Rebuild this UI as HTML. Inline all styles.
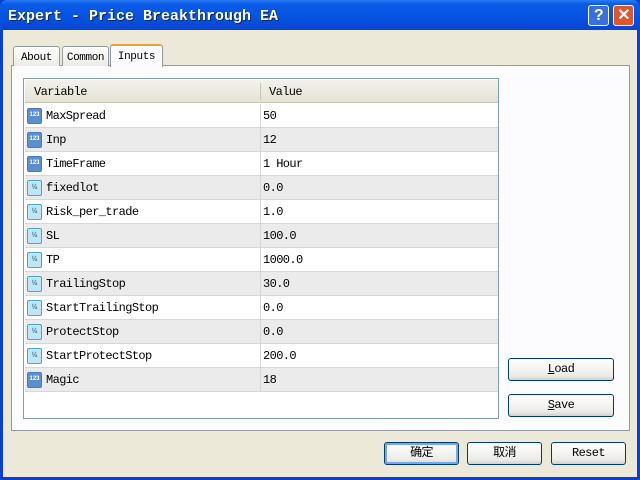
<!DOCTYPE html><html><head><style>
*{margin:0;padding:0;box-sizing:border-box}
body{width:640px;height:480px;overflow:hidden;background:#0a3fd4;font-family:"Liberation Mono","Noto Sans CJK SC",monospace;font-size:12px;letter-spacing:-0.6px;position:relative}
.title{position:absolute;left:0;top:0;width:640px;height:30px;background:linear-gradient(#2b7cf5 0,#0b5ce8 4px,#0550e0 20px,#0a44d0 30px);border-radius:7px 7px 0 0}
.title span{position:absolute;left:8px;top:8px;color:#fff;font-weight:bold;font-size:15px;text-shadow:1px 1px #0a246a;letter-spacing:0}
.tb{position:absolute;top:5px;width:21px;height:21px;border:1px solid #fff;border-radius:3px;color:#fff;font:bold 16px "Liberation Sans",sans-serif;text-align:center;line-height:19px}
.body{position:absolute;left:3px;top:30px;width:634px;height:447px;background:#ece9d8}
.tab{position:absolute;top:44px;height:22px;border:1px solid #919b9c;border-bottom:none;background:linear-gradient(#fff,#ecebe6);border-radius:3px 3px 0 0;padding:5px 0 0;text-align:center;font-size:11px;letter-spacing:-0.4px}
.panel{position:absolute;left:11px;top:65px;width:619px;height:366px;border:1px solid #919b9c;background:#fcfcfe}
.grid{position:absolute;left:23px;top:78px;width:476px;height:341px;border:1px solid #7f9db9;background:#fff}
.row{position:absolute;left:1px;width:473px;height:24px;border-bottom:1px solid #d6d6d6}
.row div{position:absolute;top:5px}
.c1{left:21px}.c2{left:238px}
.sep{position:absolute;left:235px;top:0!important;width:1px;height:23px;background:#d6d6d6}
.ic{position:absolute;left:2px;top:4px;width:15px;height:16px;border:1px solid #4a7bb8;border-radius:2px;font:bold 6px "Liberation Sans",sans-serif;line-height:13px;text-align:center;color:#fff;background:#5b8fd0;letter-spacing:0}
.ic.f{background:#bfe6f2;border-color:#4aa6c8;color:#2a6f90;font-size:7px}
.btn{position:absolute;height:23px;border:1px solid #003c74;border-radius:3px;background:linear-gradient(#fff,#ecebe6 80%,#d6d0c5);text-align:center;line-height:21px}
</style></head><body>
<div class="title"><span>Expert - Price Breakthrough EA</span>
<div class="tb" style="left:588px;background:#3a6fe0">?</div>
<div class="tb" style="left:613px;background:#e0542e">✕</div></div>
<div class="body"></div>
<div class="panel"></div>
<div class="tab" style="left:13px;width:47px;top:46px;height:20px">About</div>
<div class="tab" style="left:62px;width:47px;top:46px;height:20px">Common</div>
<div class="tab" style="left:110px;width:53px;height:23px;background:#fcfcfe;border-top:2px solid #f0a030">Inputs</div>
<div class="grid">
<div class="row" style="top:1px;height:23px;background:linear-gradient(#f3f2ea,#e6e3d5);border-bottom:1px solid #c8c5b5"><div style="left:9px;top:5px">Variable</div><div class="c2" style="left:244px">Value</div><div class="sep" style="background:#c8c5b5;top:3px!important;height:17px"></div></div>
</div>
<div id="rows"></div>
<div class="btn" style="left:508px;top:358px;width:106px"><u>L</u>oad</div>
<div class="btn" style="left:508px;top:394px;width:106px"><u>S</u>ave</div>
<div class="btn" style="left:384px;top:442px;width:75px;box-shadow:inset 0 0 0 2px #7ba6e8">确定</div>
<div class="btn" style="left:467px;top:442px;width:75px">取消</div>
<div class="btn" style="left:551px;top:442px;width:75px">Reset</div>
<script>
var d=[["MaxSpread","50",1],["Inp","12",1],["TimeFrame","1 Hour",1],["fixedlot","0.0",0],["Risk_per_trade","1.0",0],["SL","100.0",0],["TP","1000.0",0],["TrailingStop","30.0",0],["StartTrailingStop","0.0",0],["ProtectStop","0.0",0],["StartProtectStop","200.0",0],["Magic","18",1]];
var h="";d.forEach(function(r,i){h+='<div class="row" style="left:25px;top:'+(104+i*24)+'px;background:'+(i%2?'#ebebeb':'#fff')+'"><span class="ic'+(r[2]?'':' f')+'">'+(r[2]?'123':'½')+'</span><div class="c1">'+r[0]+'</div><div class="sep"></div><div class="c2">'+r[1]+'</div></div>'});
document.getElementById("rows").innerHTML=h;
</script>
</body></html>
